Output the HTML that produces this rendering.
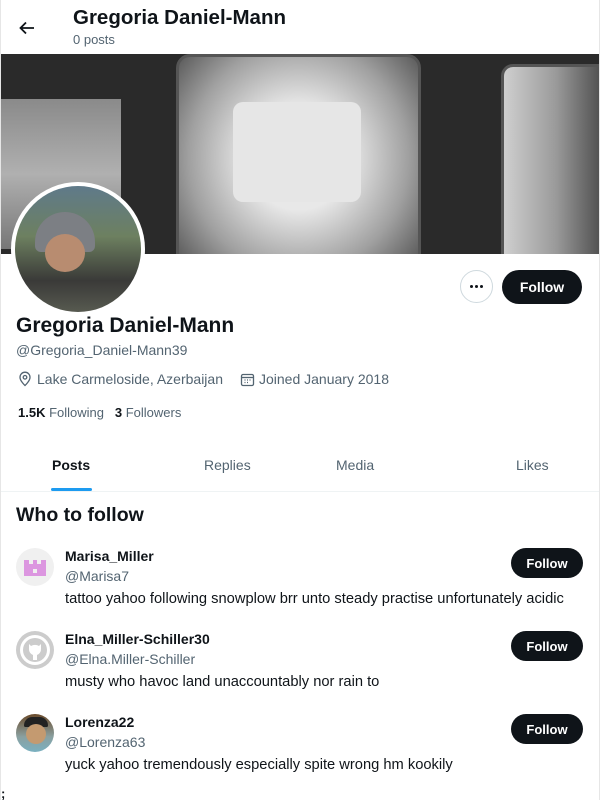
<!DOCTYPE html>
<html><head><style>
*{margin:0;padding:0;box-sizing:border-box}
body{width:600px;height:800px;background:#fff;font-family:"Liberation Sans",sans-serif;color:#0f1419;position:relative;overflow:hidden}
.abs{position:absolute}
.g{color:#536471}
.btn{position:absolute;background:#0f1419;color:#fff;font-weight:bold;border-radius:20px;display:flex;align-items:center;justify-content:center}
.av{position:absolute;width:38px;height:38px;border-radius:50%;overflow:hidden}
.t{font-size:14.7px}
.h{font-size:14px}
</style></head><body>
<div class="abs" style="left:0;top:0;width:1px;height:800px;background:#e6e6e6"></div>
<div class="abs" style="left:599px;top:0;width:1px;height:800px;background:#e6e6e6"></div>
<svg class="abs" style="left:17px;top:18px" width="20" height="20" viewBox="0 0 20 20"><path d="M17 10H4M9 4.5L3.5 10 9 15.5" stroke="#0f1419" stroke-width="1.8" fill="none"/></svg>
<div class="abs" style="left:73px;top:6px;font-size:20.5px;font-weight:bold">Gregoria Daniel-Mann</div>
<div class="abs g" style="left:73px;top:32px;font-size:13px">0 posts</div>
<div class="abs" style="left:1px;top:54px;width:598px;height:200px;background:#2a2a2a;overflow:hidden">
 <div class="abs" style="left:0;top:45px;width:120px;height:150px;background:linear-gradient(#8a8a8a,#b0b0b0,#777)"></div>
 <div class="abs" style="left:175px;top:0px;width:245px;height:230px;border-radius:14px;background:radial-gradient(ellipse at 50% 45%,#e8e8e8 30%,#a0a0a0 65%,#444 100%);border:3px solid #555"></div>
 <div class="abs" style="left:232px;top:48px;width:128px;height:100px;border-radius:10px;background:#e6e6e6"></div>
 <div class="abs" style="left:500px;top:10px;width:110px;height:215px;border-radius:12px;background:linear-gradient(90deg,#cfcfcf,#9a9a9a 50%,#444);border:3px solid #555"></div>
</div>
<div class="abs" style="left:11px;top:182px;width:134px;height:134px;border-radius:50%;background:#fff"></div>
<div class="abs" style="left:15px;top:186px;width:126px;height:126px;border-radius:50%;overflow:hidden;background:linear-gradient(#5f7a8a,#6d8060 40%,#3a3a38 75%,#575a50)">
 <div class="abs" style="left:20px;top:26px;width:60px;height:40px;border-radius:30px 30px 6px 6px;background:#7c7f84"></div>
 <div class="abs" style="left:30px;top:48px;width:40px;height:38px;border-radius:50%;background:#b88c70"></div>
</div>
<div class="abs" style="left:460px;top:270px;width:33px;height:33px;border-radius:50%;border:1px solid #cfd9de;display:flex;align-items:center;justify-content:center;gap:2px">
<i style="width:3px;height:3px;border-radius:50%;background:#0f1419"></i><i style="width:3px;height:3px;border-radius:50%;background:#0f1419"></i><i style="width:3px;height:3px;border-radius:50%;background:#0f1419"></i></div>
<div class="btn" style="left:502px;top:270px;width:80px;height:34px;font-size:14px">Follow</div>
<div class="abs" style="left:16px;top:314px;font-size:21px;font-weight:bold">Gregoria Daniel-Mann</div>
<div class="abs g" style="left:16px;top:342px;font-size:14px">@Gregoria_Daniel-Mann39</div>
<svg class="abs" style="left:17px;top:371px" width="16" height="16" viewBox="0 0 16 16"><path d="M8 14.5s-5-4.5-5-8.3a5 5 0 0110 0c0 3.8-5 8.3-5 8.3z" stroke="#536471" stroke-width="1.3" fill="none"/><circle cx="8" cy="6.3" r="1.8" stroke="#536471" stroke-width="1.3" fill="none"/></svg>
<div class="abs g" style="left:37px;top:371px;font-size:14px">Lake Carmeloside, Azerbaijan</div>
<svg class="abs" style="left:240px;top:372px" width="15" height="15" viewBox="0 0 15 15"><rect x="1.5" y="2.5" width="12" height="11" rx="1.5" stroke="#536471" stroke-width="1.3" fill="none"/><path d="M1.5 5.5h12" stroke="#536471" stroke-width="1.3"/><path d="M4.5 8h1M7 8h1M9.5 8h1M4.5 10.5h1M7 10.5h1" stroke="#536471" stroke-width="1.2"/></svg>
<div class="abs g" style="left:259px;top:371px;font-size:14px">Joined January 2018</div>
<div class="abs" style="left:18px;top:405px;font-size:13px"><b>1.5K</b> <span class="g">Following</span>&nbsp;&nbsp; <b>3</b> <span class="g">Followers</span></div>
<div class="abs" style="left:52px;top:457px;font-size:14px;font-weight:bold">Posts</div>
<div class="abs g" style="left:204px;top:457px;font-size:14px">Replies</div>
<div class="abs g" style="left:336px;top:457px;font-size:14px">Media</div>
<div class="abs g" style="left:516px;top:457px;font-size:14px">Likes</div>
<div class="abs" style="left:51px;top:488px;width:41px;height:3px;border-radius:2px;background:#1d9bf0"></div>
<div class="abs" style="left:1px;top:491px;width:598px;height:1px;background:#eff3f4"></div>
<div class="abs" style="left:16px;top:504px;font-size:19.5px;font-weight:bold">Who to follow</div>

<div class="av" style="left:16px;top:548px;background:#f0f0f0"><svg width="38" height="38" viewBox="0 0 38 38"><path d="M8 12h5v4h4v-4h4v4h4v-4h5v16H8z" fill="#dc96e0"/><rect x="17" y="21" width="4" height="4" fill="#f0f0f0"/></svg></div>
<div class="abs" style="left:65px;top:548px;font-size:14px;font-weight:bold">Marisa_Miller</div>
<div class="abs g h" style="left:65px;top:568px">@Marisa7</div>
<div class="abs t" style="left:65px;top:591px">tattoo yahoo following snowplow brr unto steady practise unfortunately acidic</div>
<div class="btn" style="left:511px;top:548px;width:72px;height:30px;font-size:13px">Follow</div>

<div class="av" style="left:16px;top:631px;background:#ccc"><svg width="38" height="38" viewBox="0 0 38 38"><circle cx="19" cy="19" r="15" fill="#fff"/><circle cx="19" cy="19" r="12" fill="#ccc"/><path d="M13 13l2 2a8 8 0 018 0l2-2v5a6 6 0 01-4 6v5h-4v-5a6 6 0 01-4-6z" fill="#fff"/></svg></div>
<div class="abs" style="left:65px;top:631px;font-size:14px;font-weight:bold">Elna_Miller-Schiller30</div>
<div class="abs g h" style="left:65px;top:651px">@Elna.Miller-Schiller</div>
<div class="abs t" style="left:65px;top:674px">musty who havoc land unaccountably nor rain to</div>
<div class="btn" style="left:511px;top:631px;width:72px;height:30px;font-size:13px">Follow</div>

<div class="av" style="left:16px;top:714px;background:linear-gradient(#6a4a2a,#8aa0a0 60%,#7ab0c0)"><div class="abs" style="left:8px;top:3px;width:24px;height:10px;border-radius:10px 10px 2px 2px;background:#222"></div><div class="abs" style="left:10px;top:10px;width:20px;height:20px;border-radius:50%;background:#c49a70"></div></div>
<div class="abs" style="left:65px;top:714px;font-size:14px;font-weight:bold">Lorenza22</div>
<div class="abs g h" style="left:65px;top:734px">@Lorenza63</div>
<div class="abs t" style="left:65px;top:757px">yuck yahoo tremendously especially spite wrong hm kookily</div>
<div class="btn" style="left:511px;top:714px;width:72px;height:30px;font-size:13px">Follow</div>
<div class="abs" style="left:1px;top:786px;font-size:13px;font-weight:bold">;</div>
</body></html>
